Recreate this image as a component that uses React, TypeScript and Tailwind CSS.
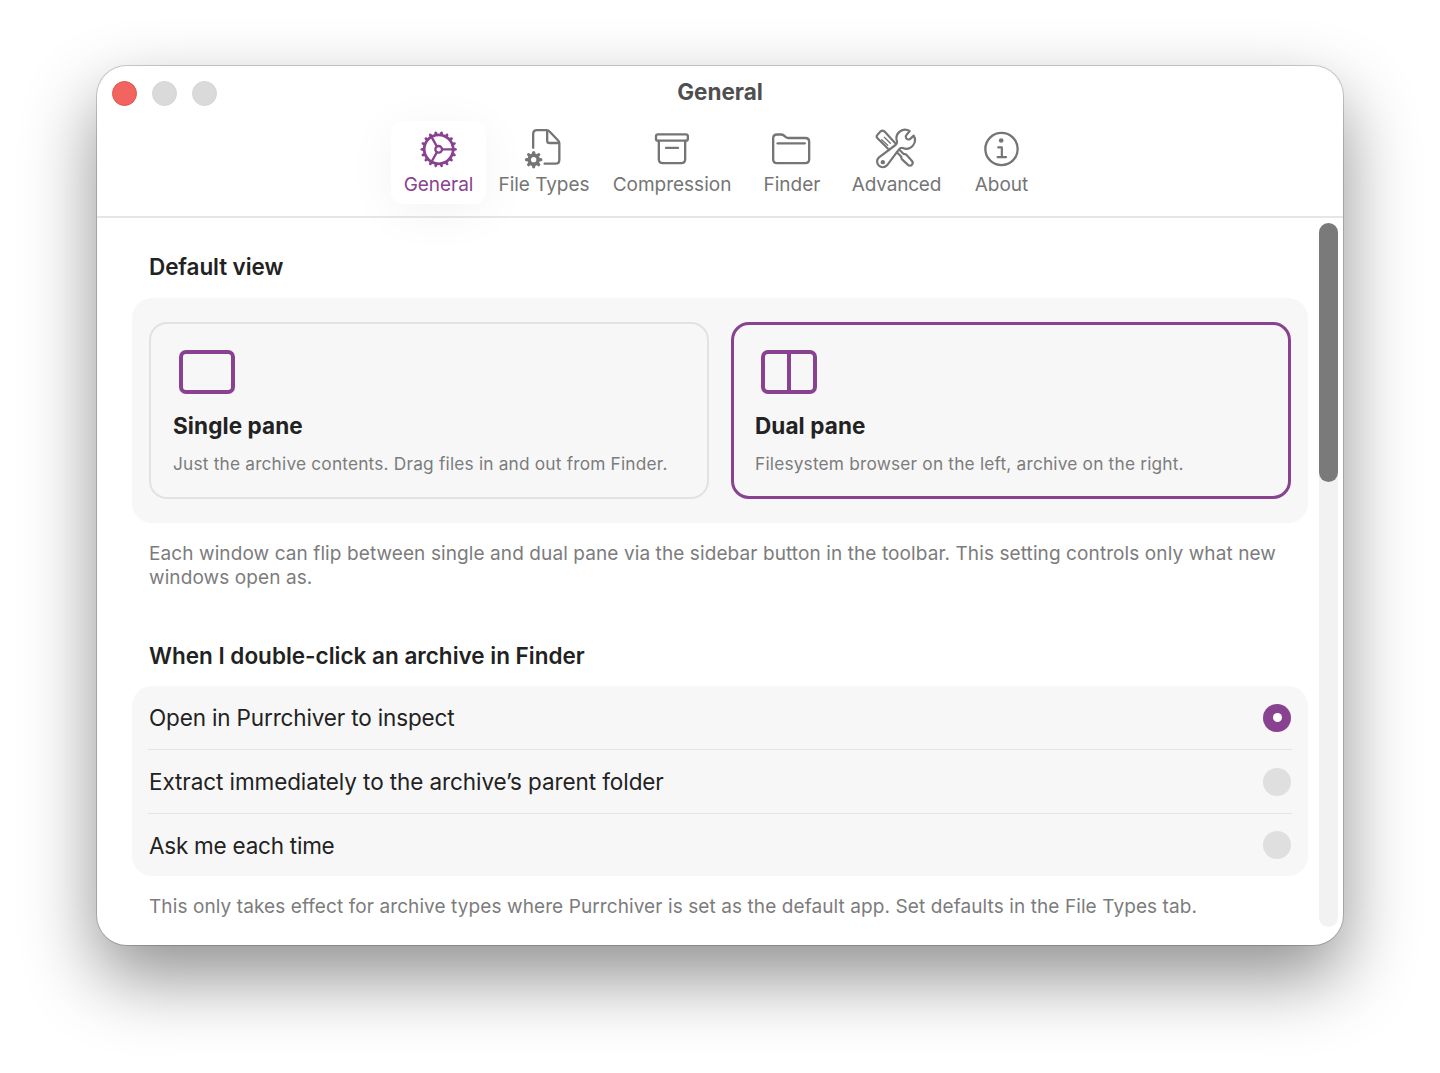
import { useState, type ReactNode } from "react";
import clsx from "clsx";

function TabIcon({ children }: { children: ReactNode }) {
  return (
    <svg
      viewBox="0 0 132 132"
      className="block size-11"
      fill="none"
      stroke="currentColor"
      strokeWidth={7}
      strokeLinecap="round"
      strokeLinejoin="round"
    >
      {children}
    </svg>
  );
}

const TEETH = Array.from({ length: 18 }, (_, i) => i * 20);
const SMALL_TEETH = Array.from({ length: 8 }, (_, i) => i * 45);

function GearIcon() {
  return (
    <TabIcon>
      <circle cx="65" cy="67" r="43.5" strokeWidth={8.5} />
      {TEETH.map((a) => (
        <path key={a} d="M112 67h4" strokeWidth={8.5} strokeLinecap="butt" transform={`rotate(${a} 65 67)`} />
      ))}
      {TEETH.map((a) => (
        <path key={a} d="M110 67h6" strokeWidth={7} transform={`rotate(${a} 65 67)`} />
      ))}
      <circle cx="65" cy="67" r="10" strokeWidth={7} />
      <path d="M76 67h31M59.5 58 44 30.5M59.5 76 44 103.5" strokeWidth={7} />
    </TabIcon>
  );
}

function FileGearIcon() {
  return (
    <TabIcon>
      <path d="M33.5 62V21q0-11.5 11.5-11.5h29q5 0 8.5 4l26 27q3.5 3.5 3.5 8.5v49q0 12-12 12H68" />
      <path d="M75.5 12v29q0 7 7 7h27" />
      <circle cx="35" cy="98" r="13.5" strokeWidth={11} />
      {SMALL_TEETH.map((a) => (
        <path key={a} d="M52 98h4.5" strokeWidth={9.5} transform={`rotate(${a} 35 98)`} />
      ))}
    </TabIcon>
  );
}

function ArchiveIcon() {
  return (
    <TabIcon>
      <rect x="18" y="22" width="95.5" height="19" rx="6" />
      <path d="M26.5 42v55q0 11.5 11.5 11.5h56q11.5 0 11.5-11.5V42" />
      <path d="M48 62.5h36" />
    </TabIcon>
  );
}

function FolderIcon() {
  return (
    <TabIcon>
      <path d="M9.5 97V34q0-11.5 11.5-11.5h12q5 0 8.5 3l6 5q3 2.5 7.5 2.5h51q11.5 0 11.5 11.5V97q0 11.5-11.5 11.5H21Q9.5 108.5 9.5 97Z" />
      <path d="M23 49h81" />
    </TabIcon>
  );
}

function ToolsIcon() {
  return (
    <TabIcon>
      <g strokeWidth={6.5} transform="translate(-3 1)">
        <path d="M45 67 10.5 33q-5.500-5.500 0-11l9.500-10q5.500-4.500 11 0l35 38" />
        <path d="M23 37 41 54M31 30 49 48" strokeWidth={4} />
        <path d="m76 67 13 13 4 .5q3 .5 5.500 3L114 101q5 6-.5 11.500-5.500 5-11.500 0L85 97q-2.500-2.500-3-5.500l-.5-4-13-13" />
        <path d="M107 11A26 26 0 0 0 69 42q1 7-4.500 11L15 90A17 17 0 1 0 39 114L75 66q4-5 11-4A26 26 0 0 0 119 25L107 36q-6 2-10-3-3-5-.5-9Z" />
        <circle cx="26.5" cy="104.5" r="6.500" fill="currentColor" stroke="none" />
      </g>
    </TabIcon>
  );
}

function InfoIcon() {
  return (
    <TabIcon>
      <circle cx="64.5" cy="66" r="48.5" />
      <circle cx="63.5" cy="40.5" r="7" fill="currentColor" stroke="none" />
      <path d="M54.5 61h11v29M53 90.500h25" strokeWidth={6.5} />
    </TabIcon>
  );
}

const TABS = [
  { label: "General", icon: <GearIcon />, width: "w-[95px]", track: "tracking-[-0.05px]" },
  { label: "File Types", icon: <FileGearIcon />, width: "w-[116px]", track: "tracking-[-0.03px]" },
  { label: "Compression", icon: <ArchiveIcon />, width: "w-[140px]", track: "tracking-normal" },
  { label: "Finder", icon: <FolderIcon />, width: "w-[100px]", track: "tracking-normal" },
  { label: "Advanced", icon: <ToolsIcon />, width: "w-[109px]", track: "tracking-[-0.18px]" },
  { label: "About", icon: <InfoIcon />, width: "w-[101px]", track: "tracking-normal" },
];

const OPEN_ACTIONS = [
  { label: "Open in Purrchiver to inspect", track: "tracking-[-0.15px]", height: "h-[63px]" },
  { label: "Extract immediately to the archive’s parent folder", track: "tracking-[-0.09px]", height: "h-16" },
  { label: "Ask me each time", track: "tracking-[-0.24px]", height: "h-[63px]" },
];

function PaneIcon({ dual }: { dual?: boolean }) {
  return (
    <div className="ml-1.5 flex h-11 w-14 rounded-[7px] border-4 border-[#884290]">
      {dual && <div className="mx-auto h-full w-1 bg-[#884290]" />}
    </div>
  );
}

type PaneCardProps = {
  title: string;
  text: string;
  track: string;
  dual?: boolean;
  selected: boolean;
  onSelect: () => void;
};

function PaneCard({ title, text, track, dual, selected, onSelect }: PaneCardProps) {
  return (
    <button
      onClick={onSelect}
      className={clsx(
        "flex h-[177px] w-[560px] flex-col items-start rounded-[18px] text-left",
        selected ? "border-[3px] border-[#884290] px-[21px] pt-[25px]" : "border-2 border-[#e2e2e2] px-[22px] pt-[26px]"
      )}
    >
      <PaneIcon dual={dual} />
      <span className={clsx("mt-[18px] text-[22.5px] leading-7 font-bold text-[#222]", track)}>{title}</span>
      <span className="mt-3 text-[17.3px] leading-6 tracking-[0.19px] whitespace-nowrap text-[#7c7c7c]">{text}</span>
    </button>
  );
}

export default function App() {
  const [tab, setTab] = useState("General");
  const [view, setView] = useState("dual");
  const [action, setAction] = useState(0);

  return (
    <div className="h-[1073px] overflow-hidden bg-white pt-[66px] pl-[97px] font-['Inter','Liberation_Sans',sans-serif]">
      <div className="flex h-[879px] w-[1246px] flex-col overflow-hidden rounded-[30px] bg-white shadow-[0_0_0_1px_rgba(0,0,0,0.18),0_32px_72px_rgba(0,0,0,0.44)]">
        {/* Title bar */}
        <header className="h-[152px] shrink-0 border-b-2 border-[#e6e6e6]">
          <div className="grid h-[55px] grid-cols-3 items-center px-[15px]">
            <div className="flex gap-[15px]">
              <span className="size-[25px] rounded-full border border-[#e0554f] bg-[#f2645f]" />
              <span className="size-[25px] rounded-full border border-[#d5d5d5] bg-[#dadada]" />
              <span className="size-[25px] rounded-full border border-[#d5d5d5] bg-[#dadada]" />
            </div>
            <h1 className="pb-[3px] text-center text-[22.5px] leading-7 font-bold text-[#4f4f4f]">General</h1>
          </div>
          <nav className="ml-[294px] flex">
            {TABS.map((t) => (
              <button
                key={t.label}
                onClick={() => setTab(t.label)}
                className={clsx(
                  "flex h-[83px] flex-col items-center rounded-xl pt-1.5",
                  t.width,
                  tab === t.label ? "bg-white text-[#884290] shadow-[0_8px_50px_rgba(0,0,0,0.05)]" : "text-[#757575]"
                )}
              >
                {t.icon}
                <span className={clsx("mt-1 text-[19px] leading-5 whitespace-nowrap", t.track)}>{t.label}</span>
              </button>
            ))}
          </nav>
        </header>

        <div className="flex min-h-0 flex-1">
          <main className="w-[1222px] pl-[35px]">
            <h2 className="mt-[35px] pl-[17px] text-[22.5px] leading-7 font-semibold tracking-[-0.1px] text-[#222]">
              Default view
            </h2>
            <section className="mt-[17px] flex h-[225px] w-[1176px] gap-[22px] rounded-[20px] bg-[#f7f7f7] px-[17px] pt-6">
              <PaneCard
                title="Single pane"
                text="Just the archive contents. Drag files in and out from Finder."
                track="tracking-[0.1px]"
                selected={view === "single"}
                onSelect={() => setView("single")}
              />
              <PaneCard
                title="Dual pane"
                text="Filesystem browser on the left, archive on the right."
                track="tracking-[0.1px]"
                dual
                selected={view === "dual"}
                onSelect={() => setView("dual")}
              />
            </section>
            <p className="mt-[19px] w-[1150px] pl-[17px] text-[19px] leading-6 tracking-[0.096px] text-[#7c7c7c]">
              Each window can flip between single and dual pane via the sidebar button in the toolbar. This setting
              controls only what new windows open as.
            </p>

            <h2 className="mt-[52px] pl-[17px] text-[22.5px] leading-7 font-semibold text-[#222]">
              When I double-click an archive in Finder
            </h2>
            <section className="mt-4 w-[1176px] rounded-[20px] bg-[#f7f7f7] px-4">
              {OPEN_ACTIONS.map((a, i) => (
                <button
                  key={a.label}
                  onClick={() => setAction(i)}
                  className={clsx(
                    "flex w-full items-center justify-between",
                    a.height,
                    i > 0 && "border-t border-[#e4e4e4]"
                  )}
                >
                  <span className={clsx("pt-px pl-px text-[22.5px] leading-7 text-[#222]", a.track)}>{a.label}</span>
                  <span
                    className={clsx(
                      "mr-px flex size-7 items-center justify-center rounded-full",
                      action === i ? "bg-[#884290]" : "bg-[#dfdfdf]"
                    )}
                  >
                    {action === i && <span className="size-[9px] rounded-full bg-white" />}
                  </span>
                </button>
              ))}
            </section>
            <p className="mt-[19px] pl-[17px] text-[19px] leading-6 tracking-[0.093px] text-[#7c7c7c]">
              This only takes effect for archive types where Purrchiver is set as the default app. Set defaults in the
              File Types tab.
            </p>
          </main>

          {/* Scrollbar */}
          <div className="mt-[5px] mb-[18px] w-[19px] rounded-full bg-[#f2f2f2]">
            <div className="h-[259px] rounded-full bg-[#7a7a7a]" />
          </div>
        </div>
      </div>
    </div>
  );
}
